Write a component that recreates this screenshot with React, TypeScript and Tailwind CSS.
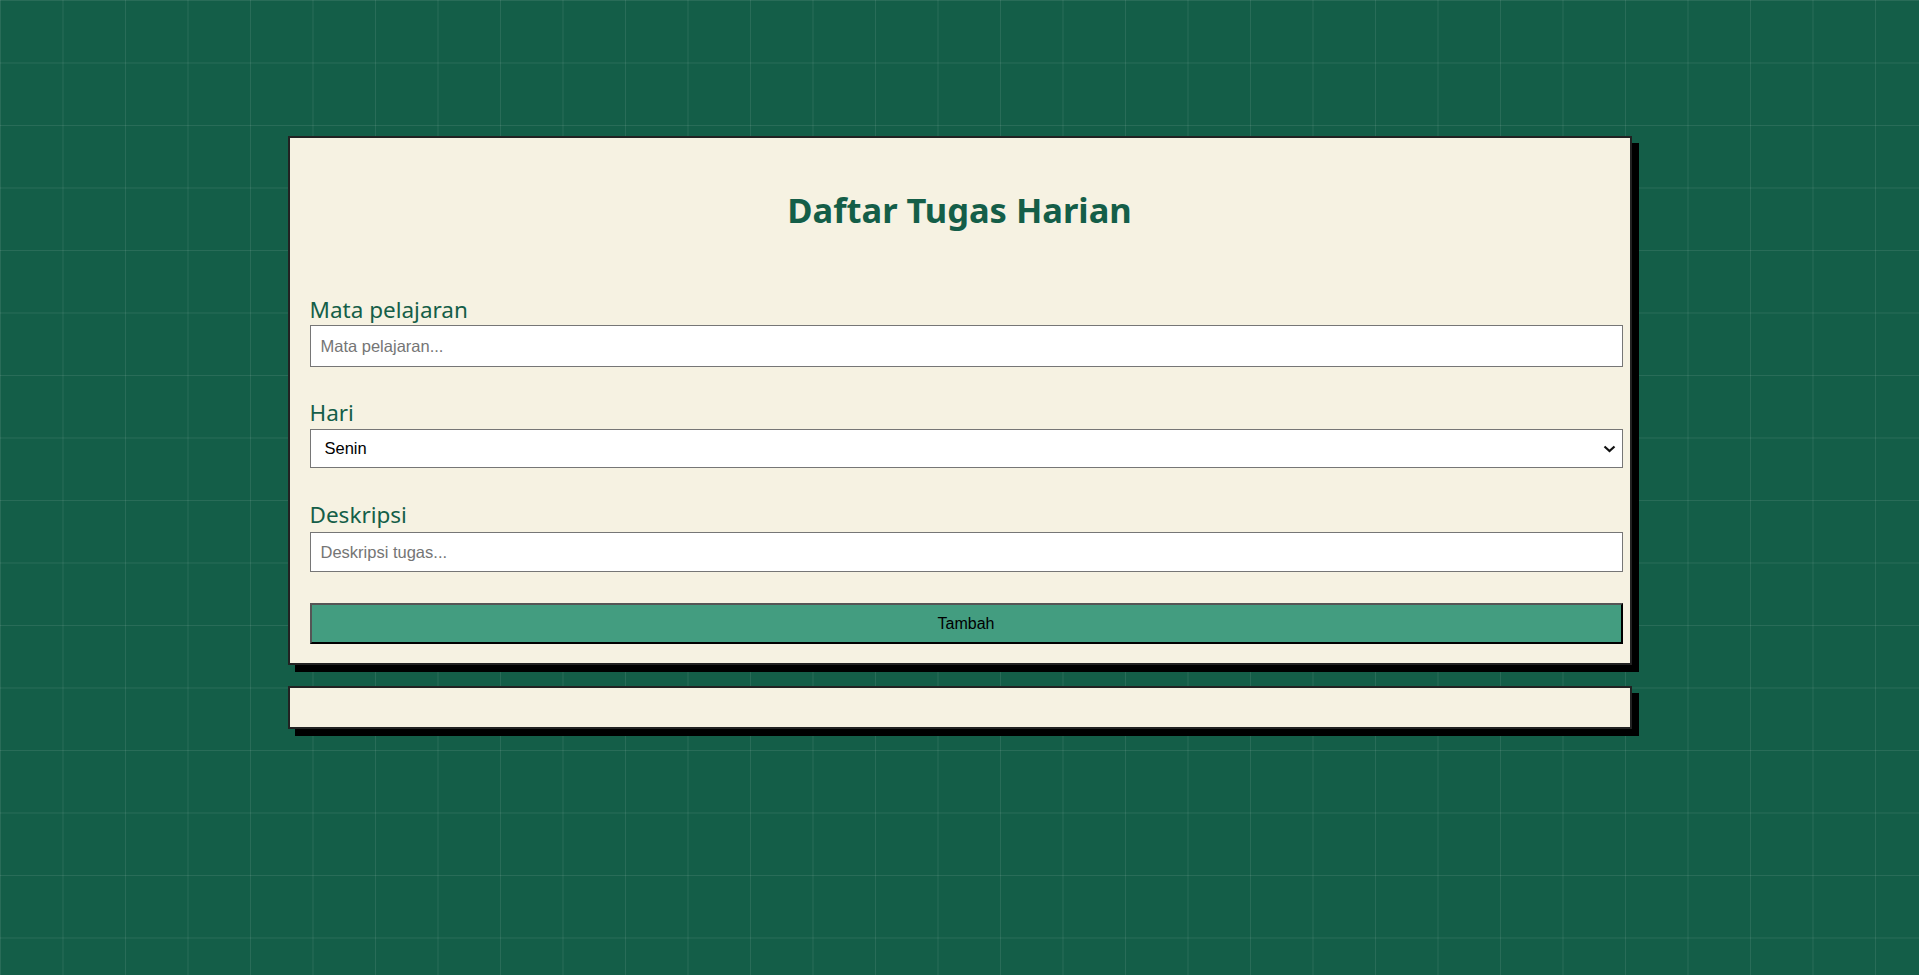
import { useState } from "react";

const comic = "font-['Comic_Sans_MS','Noto_Sans',sans-serif]";
const arial = "font-['Liberation_Sans',Arial,sans-serif]";

const HARI = ["Senin", "Selasa", "Rabu", "Kamis", "Jumat", "Sabtu", "Minggu"];

const App = () => {
  const [mapel, setMapel] = useState("");
  const [hari, setHari] = useState("Senin");
  const [desk, setDesk] = useState("");

  return (
    <div className="min-h-screen bg-[#145e48] bg-[linear-gradient(to_right,rgba(255,255,255,0.09)_1px,transparent_1px),linear-gradient(to_bottom,rgba(255,255,255,0.09)_1px,transparent_1px)] bg-size-[62.5px_62.5px] pt-[136px]">
      <div className="mx-auto w-[1344px]">
        <div className="border-2 border-[#222] bg-[#f6f2e2] shadow-[7px_7px_0_#000] pl-5 pr-[7px] pt-[49px] pb-[19px]">
          <h1
            className={`${comic} mr-[13px] text-center text-[34.5px] leading-[46px] font-bold text-[#145e48] mb-[63px]`}
          >
            Daftar Tugas Harian
          </h1>

          <form className="flex flex-col" onSubmit={(e) => e.preventDefault()}>
            <label className={`${comic} block text-[22.5px] leading-[28px] text-[#145e48] mb-px`}>
              Mata pelajaran
            </label>
            <input
              value={mapel}
              onChange={(e) => setMapel(e.target.value)}
              placeholder="Mata pelajaran..."
              className={`${arial} h-[42px] w-full border border-[#767676] bg-white px-[10px] text-[16.5px] text-black placeholder:text-[#757575] outline-none`}
            />

            <label className={`${comic} block text-[22.5px] leading-[28px] text-[#145e48] mt-[32px] mb-[2px]`}>
              Hari
            </label>
            <div className="relative">
              <select
                value={hari}
                onChange={(e) => setHari(e.target.value)}
                className={`${arial} h-[39px] w-full appearance-none border border-[#767676] bg-white pl-[14px] text-[16.5px] text-black outline-none`}
              >
                {HARI.map((h) => (
                  <option key={h}>{h}</option>
                ))}
              </select>
              <svg
                className="pointer-events-none absolute right-[7px] top-[16px]"
                width="13"
                height="8"
                viewBox="0 0 13 8"
                fill="none"
              >
                <path d="M1.5 1.5L6.5 6L11.5 1.5" stroke="#111" strokeWidth="2.2" />
              </svg>
            </div>

            <label className={`${comic} block text-[22.5px] leading-[28px] text-[#145e48] mt-[33px] mb-[3px]`}>
              Deskripsi
            </label>
            <input
              value={desk}
              onChange={(e) => setDesk(e.target.value)}
              placeholder="Deskripsi tugas..."
              className={`${arial} h-[40px] w-full border border-[#767676] bg-white px-[10px] text-[16.5px] text-black placeholder:text-[#757575] outline-none`}
            />

            <button
              type="submit"
              className={`${arial} mt-[31px] h-[41px] w-full border-2 border-t-[#555] border-l-[#555] border-b-black border-r-black bg-[#439d80] text-[16px] text-black`}
            >
              Tambah
            </button>
          </form>
        </div>

        <div className="mt-[21px] h-[43px] border-2 border-[#222] bg-[#f6f2e2] shadow-[7px_7px_0_#000]" />
      </div>
    </div>
  );
};

export default App;
